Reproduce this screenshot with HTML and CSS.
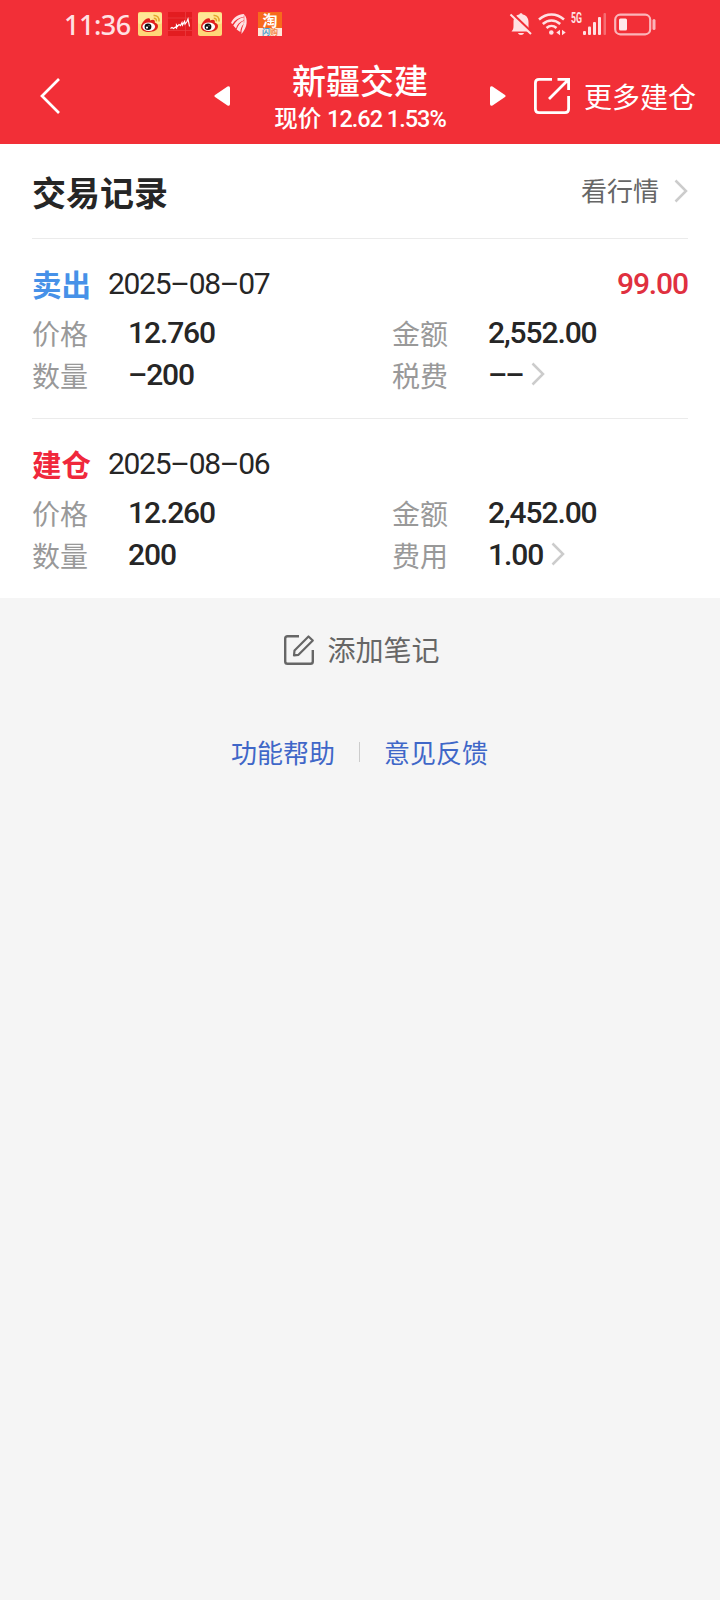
FILE: index.html
```html
<!DOCTYPE html>
<html lang="zh-CN">
<head>
  <meta charset="UTF-8">
  <title>新疆交建</title>
  <link rel="stylesheet" href="styles.css">
</head>
<body>
  <svg class="defs" width="0" height="0">
    <symbol id="weibo" viewBox="0 0 24 24">
      <rect width="24" height="24" rx="2" fill="#ffd878"/>
      <rect y="1" width="24" height="11" rx="2" fill="#ffe795"/>
      <path d="M3 15C3 11 8 5.500 11 6.200C12.600 6.600 12 8.600 12 8.600C15 7.300 17.500 7.600 16.800 10.500C19 11.200 20 12.600 20 14.300C20 18 15.500 20 11 20C6.500 20 3 18 3 15Z" fill="#df1f1c"/>
      <ellipse cx="10.800" cy="14.800" rx="6.300" ry="4.200" fill="#fff"/>
      <ellipse cx="10" cy="14.800" rx="3.400" ry="3.200" fill="#111"/>
      <circle cx="9" cy="15.600" r="1.100" fill="#fff"/>
      <circle cx="11" cy="13.800" r=".5" fill="#fff"/>
      <path d="M15.500 3.500C19 3 21.500 5.500 21 9.500M15.800 6.300C17.700 6.200 18.700 7.300 18.400 9.300" fill="none" stroke="#e5a52c" stroke-width="1.500"/>
    </symbol>
    <symbol id="arrow" viewBox="0 0 14 24">
      <path d="M1.500 1.500L12 12L1.500 22.500" fill="none" stroke="#ccc" stroke-width="2.500"/>
    </symbol>
  </svg>

  <div class="status-bar">
    <span class="time">11:36</span>
    <div class="apps">
      <svg width="24" height="24"><use href="#weibo"/></svg>
      <svg width="24" height="24" viewBox="0 0 24 24">
        <rect width="24" height="24" fill="#e31c20"/>
        <path d="M0 6H24M0 18.500H24M17.500 0V24" stroke="#ea4145" stroke-width=".7"/>
        <path d="M2.500 16.500L4 15.500L5.500 16.500L7.500 15L8.500 16V13L9.500 14.500L11 12.500L12.500 13.500L14 10.500L14.500 13L16.500 9.500L17 12L19 9.500L20 7L21.500 14.500" fill="none" stroke="#fff" stroke-width="1.200"/>
      </svg>
      <svg width="24" height="24"><use href="#weibo"/></svg>
      <svg width="24" height="24" viewBox="0 0 24 24" fill="#ffe1e3">
        <path d="M3 11C5.500 5.500 10 2.300 16 2L15.800 4.800C10.500 6 7 8 4.500 12Z"/>
        <path d="M5.300 13.500C8 8.800 11 6 15.800 5.200V8.300C11.500 10 9 12.500 8 16.500Z"/>
        <path d="M8.600 17.500C10 13.300 12 10.500 15.800 8.700V12C13.500 14 12.700 16.500 12.300 20Z"/>
        <path d="M16.300 2.300C20 7 19.700 15 13.500 22C13 17.500 15.300 13.500 16.200 10.500Z"/>
      </svg>
      <svg width="24" height="24" viewBox="0 0 24 24">
        <rect width="24" height="24" fill="#f76a1c"/>
        <path d="M0 16H24V24H0Z" fill="#ffe9db"/>
        <text x="12" y="14" class="tao">淘</text>
        <text x="12" y="23" class="tao-sub"><tspan fill="#4b9bd0">闪</tspan><tspan fill="#f58a4e">购</tspan></text>
      </svg>
    </div>
    <div class="system">
      <svg width="24" height="24" viewBox="0 0 24 24">
        <path d="M2.500 19.500C4 18 4.500 16.500 4.500 14V10C4.500 5.500 7 3 10.300 2.400C10.800 .8 13.200 .8 13.700 2.400C17 3 19.500 5.500 19.500 10V14C19.500 16.500 20 18 21.500 19.500Z" fill="#ffe1e3"/>
        <path d="M9 21H15C14.500 23.500 9.500 23.500 9 21Z" fill="#ffe1e3"/>
        <path d="M2.500 1L23.500 21" stroke="#f22f37" stroke-width="2.500"/>
        <path d="M1.500 2.500L22 22" stroke="#ffe1e3" stroke-width="2"/>
      </svg>
      <svg class="wifi" width="28" height="24" viewBox="0 0 28 24" fill="none" stroke="#ffe1e3" stroke-width="2.500">
        <path d="M1 7.500C8.500 .8 18.500 .8 26 7.500M4.800 12C10 7.300 17 7.300 22.200 12M8.500 16C11.500 13.300 15.500 13.300 18.500 16"/>
        <circle cx="13.300" cy="20.500" r="2.300" fill="#ffe1e3" stroke="none"/>
        <path d="M22 17.800V23.200L18.300 20.500ZM24 17.800V23.200L27.700 20.500Z" fill="#ffe1e3" stroke="none"/>
      </svg>
      <svg class="network" width="12" height="24" viewBox="0 0 12 24">
        <text x="0" y="11" textLength="11" lengthAdjust="spacingAndGlyphs">5G</text>
      </svg>
      <svg width="24" height="24" viewBox="0 0 24 24" fill="#ffe1e3">
        <rect x="0" y="19" width="3" height="4" rx="1"/>
        <rect x="5" y="14.500" width="3" height="8.500" rx="1"/>
        <rect x="10" y="10" width="3" height="13" rx="1"/>
        <rect x="15" y="5" width="3" height="18" rx="1"/>
        <rect x="20.500" y="1" width="2.500" height="22" rx="1" opacity=".35"/>
      </svg>
      <svg class="battery" width="42" height="24" viewBox="0 0 42 24">
        <rect x="1.200" y="2.700" width="35" height="19.600" rx="5" fill="none" stroke="#fbb5b9" stroke-width="2.200"/>
        <rect x="5" y="6.500" width="8" height="12" rx="1.500" fill="#ffe9ea"/>
        <rect x="38.500" y="7" width="3" height="11" rx="1.500" fill="#fbb5b9"/>
      </svg>
    </div>
  </div>

  <div class="nav">
    <svg class="back" width="22" height="36" viewBox="0 0 22 36">
      <path d="M20 1L3 18L20 35" fill="none" stroke="#fff" stroke-width="2.700"/>
    </svg>
    <div class="stock">
      <svg width="16" height="20" viewBox="0 0 16 20">
        <path d="M1 9L13.500 .5Q16 -.5 16 2V18Q16 20.500 13.500 19.500L1 11Q-.2 10 1 9Z" fill="#fff"/>
      </svg>
      <div class="stock-name">
        <h1>新疆交建</h1>
        <p>现价 <span>12.62 1.53%</span></p>
      </div>
      <svg width="16" height="20" viewBox="0 0 16 20">
        <path d="M15 9L2.500 .5Q0 -.5 0 2V18Q0 20.500 2.500 19.500L15 11Q16.200 10 15 9Z" fill="#fff"/>
      </svg>
    </div>
    <div class="more">
      <svg width="36" height="36" viewBox="0 0 36 36" fill="none" stroke="#fff" stroke-width="2.800">
        <path d="M18 1.400H5Q1.400 1.400 1.400 5V31Q1.400 34.600 5 34.600H31Q34.600 34.600 34.600 31V18"/>
        <path d="M23.500 1.400H34.600V12M34 2L15 21"/>
      </svg>
      <span>更多建仓</span>
    </div>
  </div>

  <div class="card">
    <div class="card-header">
      <h2>交易记录</h2>
      <div class="quote-link"><span>看行情</span><svg width="14" height="24"><use href="#arrow"/></svg></div>
    </div>

    <div class="record">
      <div class="record-head">
        <span class="type sell">卖出</span>
        <span class="date">2025–08–07</span>
        <span class="profit">99.00</span>
      </div>
      <div class="record-grid">
        <label>价格</label><span class="value">12.760</span>
        <label>金额</label><span class="value">2,552.00</span>
        <label>数量</label><span class="value">–200</span>
        <label>税费</label><span class="value empty">––<svg width="14" height="24"><use href="#arrow"/></svg></span>
      </div>
    </div>

    <div class="record">
      <div class="record-head">
        <span class="type buy">建仓</span>
        <span class="date">2025–08–06</span>
      </div>
      <div class="record-grid">
        <label>价格</label><span class="value">12.260</span>
        <label>金额</label><span class="value">2,452.00</span>
        <label>数量</label><span class="value">200</span>
        <label>费用</label><span class="value">1.00<svg width="14" height="24"><use href="#arrow"/></svg></span>
      </div>
    </div>
  </div>

  <div class="add-note">
    <svg width="32" height="32" viewBox="0 0 32 32" fill="none" stroke="#666" stroke-width="2.400">
      <path d="M16 2.200H4.500Q2.200 2.200 2.200 4.500V27.500Q2.200 29.800 4.500 29.800H27.500Q29.800 29.800 29.800 27.500V16"/>
      <path d="M11 21.300L11.500 16.500L25.500 2.500L29.800 6.500L15.500 20.800Z" stroke-width="2.200" stroke-linejoin="round"/>
    </svg>
    <span>添加笔记</span>
  </div>

  <div class="links">
    <a>功能帮助</a>
    <i></i>
    <a>意见反馈</a>
  </div>
</body>
</html>
```
FILE: styles.css
```css
body {
  margin: 0;
  background-color: #f5f5f5;
  font-family: Roboto, "Noto Sans CJK SC", sans-serif;
  color: #262626;
}

h1, h2, p {
  margin: 0;
}

svg {
  display: block;
  flex-shrink: 0;
}

.defs {
  position: absolute;
}

/* status bar */
.status-bar {
  display: flex;
  align-items: center;
  height: 48px;
  padding: 0 64px;
  background-color: #f22f37;
  color: #ffe1e3;
}

.time {
  width: 74px;
  padding-top: 2px;
  font-family: "Noto Sans", sans-serif;
  font-size: 27px;
  font-weight: 500;
  line-height: 50px;
  letter-spacing: -0.500px;
}

.apps {
  display: flex;
  gap: 6px;
}

.tao {
  font-size: 15px;
  font-weight: bold;
  fill: #fff;
  text-anchor: middle;
}

.tao-sub {
  font-size: 8px;
  font-weight: bold;
  text-anchor: middle;
}

.system {
  display: flex;
  margin-left: auto;
}

.wifi {
  margin-left: 5px;
}

.network {
  margin-left: 5px;
  overflow: visible;
  font-size: 14px;
  font-weight: bold;
  fill: #ffe1e3;
}

.battery {
  margin-left: 7px;
}

/* title bar */
.nav {
  display: flex;
  align-items: center;
  height: 96px;
  padding-left: 39px;
  background-color: #f22f37;
  color: #fff;
}

.stock {
  display: flex;
  align-items: center;
  justify-content: space-between;
  width: 292px;
  margin-left: 153px;
}

.stock-name {
  padding-top: 2px;
  text-align: center;
}

.stock-name h1 {
  font-size: 34px;
  font-weight: 500;
  line-height: 44px;
}

.stock-name p {
  font-size: 23.500px;
  font-weight: 500;
  line-height: 30px;
  white-space: nowrap;
}

.stock-name span {
  letter-spacing: -1px;
}

.more {
  display: flex;
  align-items: center;
  gap: 14px;
  margin-left: 28px;
  font-size: 28px;
}

/* trade records */
.card {
  padding: 0 32px;
  background-color: #fff;
}

.card-header {
  display: flex;
  align-items: center;
  justify-content: space-between;
  height: 94px;
}

.card-header h2 {
  font-size: 34px;
}

.quote-link {
  display: flex;
  align-items: center;
  gap: 15px;
  font-size: 26px;
  line-height: 36px;
  color: #666;
}

.quote-link span {
  padding-top: 2px;
}

.record {
  border-top: 1px solid #ebebeb;
  padding: 23px 0;
}

.record-head {
  display: flex;
  align-items: center;
  height: 42px;
  margin-bottom: 7px;
}

.type {
  width: 76px;
  font-size: 29.500px;
  font-weight: bold;
}

.sell {
  color: #4691e8;
}

.buy {
  color: #f0283c;
}

.date,
.profit,
.value {
  font-size: 30px;
  letter-spacing: -1.100px;
}

.date {
  letter-spacing: -1.300px;
}

.profit {
  margin-left: auto;
  font-weight: 500;
  color: #e0303f;
}

.record-grid {
  display: grid;
  grid-template-columns: 96px 264px 96px 1fr;
  grid-auto-rows: 42px;
  align-items: center;
}

.record-grid label {
  padding-top: 2px;
  font-size: 28px;
  color: #999;
}

.value {
  display: flex;
  align-items: center;
  gap: 8px;
  font-weight: 500;
}

.empty {
  letter-spacing: -2px;
}

/* footer */
.add-note {
  display: flex;
  align-items: center;
  justify-content: center;
  gap: 12px;
  height: 103px;
  padding-left: 3px;
  font-size: 28px;
  line-height: 40px;
  color: #666;
}

.add-note span,
.links a {
  padding-top: 4px;
}

.links {
  display: flex;
  align-items: center;
  justify-content: center;
  gap: 24px;
  height: 102px;
  padding-right: 1px;
  font-size: 26px;
  line-height: 36px;
  color: #3f67c8;
}

.links i {
  width: 1px;
  height: 20px;
  background-color: #ccc;
}
```
